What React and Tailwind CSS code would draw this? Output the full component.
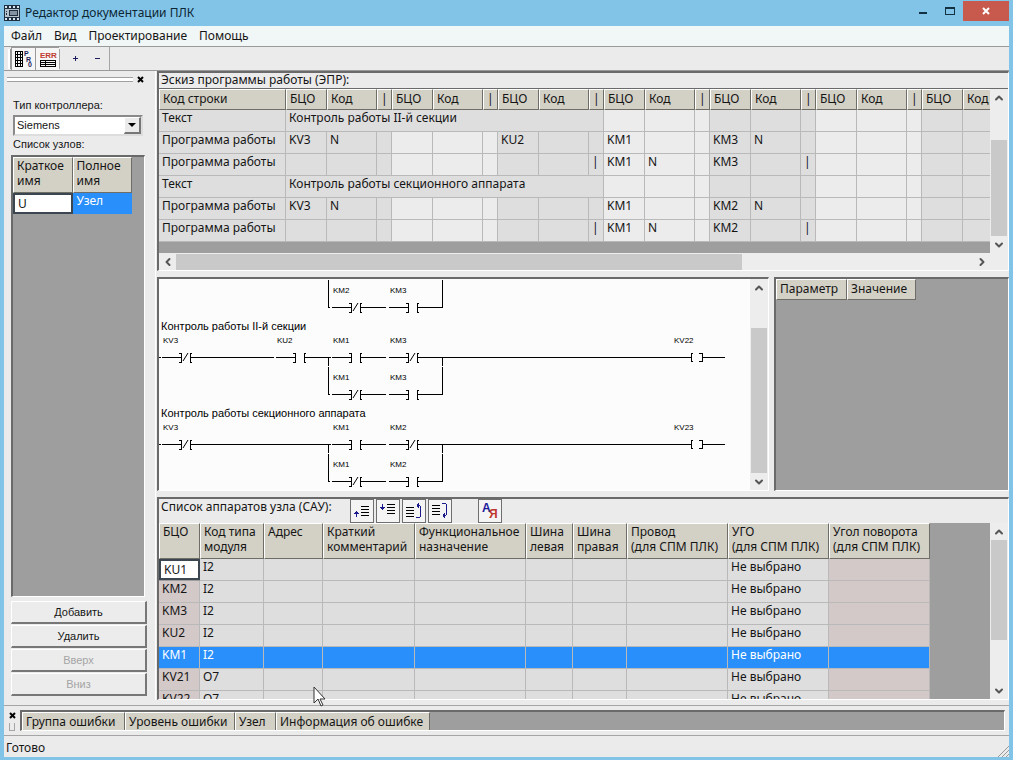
import { ChevronUp, ChevronDown, ChevronLeft, ChevronRight } from 'lucide-react'

const MENU = ['Файл', 'Вид', 'Проектирование', 'Помощь']

const GROUPS = [0, 1, 2, 3, 4, 5, 6]

// cells are keyed by "group.column", column 0 = БЦО, 1 = Код, 2 = |
const SKETCH_ROWS = [
  { type: 'Текст', text: 'Контроль работы II-й секции' },
  { type: 'Программа работы', cells: { '0.0': 'KV3', '0.1': 'N', '2.0': 'KU2', '3.0': 'KM1', '4.0': 'KM3', '4.1': 'N' } },
  { type: 'Программа работы', cells: { '2.2': '|', '3.0': 'KM1', '3.1': 'N', '4.0': 'KM3', '4.2': '|' } },
  { type: 'Текст', text: 'Контроль работы секционного аппарата' },
  { type: 'Программа работы', cells: { '0.0': 'KV3', '0.1': 'N', '3.0': 'KM1', '4.0': 'KM2', '4.1': 'N' } },
  { type: 'Программа работы', cells: { '2.2': '|', '3.0': 'KM1', '3.1': 'N', '4.0': 'KM2', '4.2': '|' } },
]

const DEVICE_COLS = [
  { title: ['БЦО'], width: 'w-[41px]' },
  { title: ['Код типа', 'модуля'], width: 'w-[64px]' },
  { title: ['Адрес'], width: 'w-[59px]' },
  { title: ['Краткий', 'комментарий'], width: 'w-[92px]' },
  { title: ['Функциональное', 'назначение'], width: 'w-[111px]' },
  { title: ['Шина', 'левая'], width: 'w-[47px]' },
  { title: ['Шина', 'правая'], width: 'w-[54px]' },
  { title: ['Провод', '(для СПМ ПЛК)'], width: 'w-[101px]' },
  { title: ['УГО', '(для СПМ ПЛК)'], width: 'w-[101px]' },
  { title: ['Угол поворота', '(для СПМ ПЛК)'], width: 'w-[101px]' },
]

const DEVICES = [
  { name: 'KU1', code: 'I2', editing: true },
  { name: 'KM2', code: 'I2' },
  { name: 'KM3', code: 'I2' },
  { name: 'KU2', code: 'I2' },
  { name: 'KM1', code: 'I2', selected: true },
  { name: 'KV21', code: 'O7' },
  { name: 'KV22', code: 'O7' },
]

const HEAD = 'border-t border-l border-r border-b border-t-white border-l-white border-r-[#6f6e66] border-b-[#6f6e66] bg-[#d3d0c5] px-[3px] text-left align-top font-normal whitespace-nowrap'
const CELL = 'h-[22px] border-r border-b border-[#b9b9b9] px-[3px] align-top leading-4 whitespace-nowrap'
const SUNKEN = 'border-t-2 border-l-2 border-r border-b border-t-[#6a6a6a] border-l-[#6a6a6a] border-r-white border-b-white'

function VScroll({ thumb, before }) {
  return (
    <div className="flex w-[18px] shrink-0 flex-col bg-[#ededed] text-[#555]">
      <button aria-label="Вверх" className="flex h-[17px] items-center justify-center">
        <ChevronUp size={12} strokeWidth={4} />
      </button>
      <div className={`flex min-h-0 flex-1 flex-col px-px ${before}`}>
        <div className={`bg-[#c9c9c9] ${thumb}`} />
      </div>
      <button aria-label="Вниз" className="flex h-[17px] items-center justify-center">
        <ChevronDown size={12} strokeWidth={4} />
      </button>
    </div>
  )
}

function TitleBar() {
  return (
    <header className="flex h-[26px] shrink-0 items-center bg-[#82c4e8]">
      <svg width="16" height="16" viewBox="0 0 16 16" className="shrink-0" shapeRendering="crispEdges">
        <rect width="16" height="16" fill="#203040" />
        <path d="M1 1h2v2H1zM5 1h2v2H5zM9 1h2v2H9zM13 1h2v2h-2zM1 13h2v2H1zM5 13h2v2H5zM9 13h2v2H9zM13 13h2v2h-2z" fill="#d8e8f0" />
        <path d="M1 4h14v8H1z" fill="#b8c4cc" />
        <path d="M5 5h9v6H5z" fill="#203040" />
        <path d="M6 6h7v4H6z" fill="#8594a2" />
        <path d="M2 6h1v1H2zM2 8h1v2H2z" fill="#203040" />
      </svg>
      <h1 className="ml-[5px] flex-1 text-[12px] text-[#0d2633]">Редактор документации ПЛК</h1>
      <div className="flex h-full items-start">
        <button aria-label="Свернуть" className="flex h-[20px] w-[27px] items-center justify-center">
          <svg width="8" height="12"><path d="M0 8h8v2H0z" fill="#12303f" /></svg>
        </button>
        <button aria-label="Развернуть" className="flex h-[22px] w-[27px] items-center justify-center">
          <svg width="10" height="8" shapeRendering="crispEdges"><path d="M0 0h10v8H0zM1 2v5h8V2z" fill="#12303f" fillRule="evenodd" /></svg>
        </button>
        <button aria-label="Закрыть" className="mt-px flex h-[20px] w-[46px] items-center justify-center bg-[#c75a4c]">
          <svg width="8" height="8"><path d="M1 1l6 6M7 1l-6 6" stroke="#fff" strokeWidth="2" /></svg>
        </button>
      </div>
    </header>
  )
}

function Toolbar() {
  return (
    <div className="flex h-[24px] shrink-0 items-center border-b border-[#9a9a9a] bg-[#ebebeb] pl-1">
      <div className="h-5 w-[3px] border-r border-[#9a9a9a] bg-white" />
      <button aria-label="Программа" className="flex h-[23px] w-6 items-center justify-center border-l border-t border-[#9a9a9a] bg-[#f6f6f6]">
        <svg width="18" height="18" shapeRendering="crispEdges">
          <path d="M0 1h8v16H0z" fill="#000" />
          {[2, 5, 8, 11, 14].map((y) => (
            <path key={y} d={`M1 ${y}h1v2h-1zM3 ${y}h2v2h-2zM6 ${y}h1v2h-1z`} fill="#f6f6f6" />
          ))}
          <g fill="#1d1d5c" fontFamily="Liberation Sans" fontWeight="bold" fontSize="7">
            <text x="9" y="6">P</text>
            <text x="11" y="12">R</text>
            <text x="13" y="17">0</text>
          </g>
        </svg>
      </button>
      <button aria-label="Ошибки" className="flex h-[23px] w-6 items-center justify-center border-l border-t border-[#9a9a9a] bg-[#f6f6f6]">
        <svg width="18" height="18" shapeRendering="crispEdges">
          <text x="1" y="8" fill="#c03a30" fontFamily="Liberation Sans Narrow, Liberation Sans" fontWeight="bold" fontSize="8">ERR</text>
          <path d="M1 10h16v7H1z" fill="#000" />
          <path d="M2 11h4v1H2zM7 11h9v1H7zM2 13h4v1H2zM7 13h9v1H7zM2 15h4v1H2zM7 15h9v1H7z" fill="#f6f6f6" />
        </svg>
      </button>
      <div className="h-5 w-px bg-[#a5a5a5]" />
      <div className="flex h-full w-[50px] items-center justify-around border-r border-[#a5a5a5] pl-1">
        <button aria-label="Добавить строку" className="h-5 w-5">
          <svg width="20" height="20" shapeRendering="crispEdges"><path d="M8 9h5v1H8zM10 7h1v5h-1z" fill="#1d1d5c" /></svg>
        </button>
        <button aria-label="Удалить строку" className="h-5 w-5">
          <svg width="20" height="20" shapeRendering="crispEdges"><path d="M7 9h5v1H7z" fill="#1d1d5c" /></svg>
        </button>
      </div>
    </div>
  )
}

function SideButton({ children, disabled }) {
  return (
    <button
      disabled={disabled}
      className="h-[23px] border-t border-l border-r-2 border-b-2 border-t-white border-l-white border-r-[#777] border-b-[#777] bg-[#ececec] text-[11px] leading-4 disabled:text-[#a5a5a5]"
    >
      {children}
    </button>
  )
}

function Sidebar() {
  return (
    <aside className="flex w-[152px] shrink-0 flex-col border-r border-white bg-[#ebebeb] pr-2 pl-[7px] pb-1 font-['Liberation_Sans',Arial,sans-serif]">
      <div className="-ml-1 flex h-[17px] shrink-0 items-center gap-1">
        <div className="h-[5px] flex-1 border-y border-[#a0a0a0] bg-white" />
        <button aria-label="Закрыть панель" className="w-[10px]">
          <svg width="7" height="7"><path d="M1 1l5 5M6 1l-5 5" stroke="#000" strokeWidth="2" /></svg>
        </button>
      </div>
      <label htmlFor="controller" className="mt-[9px] ml-0.5 text-[11px] leading-4">Тип контроллера:</label>
      <div className="relative mt-[2px] mr-1 ml-0.5">
        <select
          id="controller"
          defaultValue="Siemens"
          className="h-[21px] w-full appearance-none border-2 border-[#8a8a8a] border-r-[#ddd] border-b-[#ddd] bg-white pl-0.5 text-[11px]"
        >
          <option>Siemens</option>
        </select>
        <div className="pointer-events-none absolute top-0.5 right-0.5 flex h-[17px] w-[17px] items-center justify-center border-t border-l border-r-2 border-b-2 border-t-white border-l-white border-r-[#777] border-b-[#777] bg-[#ebebeb]">
          <svg width="8" height="4"><path d="M0 0h8L4 4z" fill="#000" /></svg>
        </div>
      </div>
      <p className="ml-0.5 text-[11px] leading-4">Список узлов:</p>
      <div className={`mt-[3px] mr-0.5 min-h-0 flex-1 bg-[#9e9e9e] font-['Noto_Sans',sans-serif] ${SUNKEN}`}>
        <table className="w-[119px] table-fixed border-separate border-spacing-0 text-[12px] leading-[15px]">
          <thead>
            <tr>
              <th className={`h-9 ${HEAD}`}>Краткое<br />имя</th>
              <th className={`h-9 ${HEAD}`}>Полное<br />имя</th>
            </tr>
          </thead>
          <tbody>
            <tr>
              <td className="p-0">
                <input aria-label="Краткое имя" defaultValue="U" className="block h-[21px] w-full border-2 border-[#3c4650] bg-white px-[3px]" />
              </td>
              <td className="h-[21px] bg-[#2990fb] px-1 align-top text-white">Узел</td>
            </tr>
          </tbody>
        </table>
      </div>
      <div className="mt-1 flex flex-col gap-[1px]">
        <SideButton>Добавить</SideButton>
        <SideButton>Удалить</SideButton>
        <SideButton disabled>Вверх</SideButton>
        <SideButton disabled>Вниз</SideButton>
      </div>
    </aside>
  )
}

function SketchPanel() {
  return (
    <section className={`flex h-[200px] shrink-0 flex-col bg-[#ebebeb] ${SUNKEN}`}>
      <h2 className="h-[15px] shrink-0 pl-0.5 leading-[14px]">Эскиз программы работы (ЭПР):</h2>
      <div className="flex min-h-0 flex-1 border-t border-[#6a6a6a]">
        <div className="min-w-0 flex-1 overflow-hidden bg-[#9e9e9e]">
          <table className="w-[869px] table-fixed border-separate border-spacing-0">
            <colgroup>
              <col className="w-[127px]" />
              {GROUPS.map((g) => [
                <col key={`${g}a`} className="w-[41px]" />,
                <col key={`${g}b`} className="w-[50px]" />,
                <col key={`${g}c`} className="w-[15px]" />,
              ])}
            </colgroup>
            <thead>
              <tr className="leading-[17px]">
                <th className={`h-[21px] ${HEAD}`}>Код строки</th>
                {GROUPS.map((g) => [
                  <th key={`${g}a`} className={HEAD}>БЦО</th>,
                  <th key={`${g}b`} className={HEAD}>Код</th>,
                  <th key={`${g}c`} className={HEAD}>{g < 6 && '|'}</th>,
                ])}
              </tr>
            </thead>
            <tbody>
              {SKETCH_ROWS.map((row, i) => (
                <tr key={i}>
                  <td className={`bg-[#dedede] ${CELL}`}>{row.type}</td>
                  {row.text && <td colSpan={9} className={`bg-[#dedede] ${CELL}`}>{row.text}</td>}
                  {GROUPS.filter((g) => !row.text || g > 2).map((g) =>
                    [0, 1, 2].map((c) => (
                      <td key={`${g}.${c}`} className={`${g % 2 ? 'bg-[#ececec]' : 'bg-[#dedede]'} ${CELL}`}>
                        {row.cells?.[`${g}.${c}`]}
                      </td>
                    ))
                  )}
                </tr>
              ))}
            </tbody>
          </table>
        </div>
        <VScroll before="pt-[34px]" thumb="flex-1" />
      </div>
      <div className="flex h-[17px] shrink-0 items-center bg-[#ededed] pr-[18px] text-[#555]">
        <button aria-label="Влево" className="flex w-[17px] justify-center">
          <ChevronLeft size={12} strokeWidth={4} />
        </button>
        <div className="h-4 flex-1">
          <div className="h-full w-[71%] bg-[#c9c9c9]" />
        </div>
        <button aria-label="Вправо" className="flex w-[17px] justify-center">
          <ChevronRight size={12} strokeWidth={4} />
        </button>
      </div>
    </section>
  )
}

// One contact of the ladder, 57px wide: wire, bracket, optional slash, bracket, wire
function Contact({ x, y, name, closed }) {
  return (
    <g>
      <text x={x + 2} y={y - 14} fontSize="8">{name}</text>
      <path
        d={`M${x + 1} ${y}h19M${x + 18} ${y - 4}h2v9h-2M${x + 31} ${y - 4}h-2v9h2M${x + 29} ${y}h26`}
        fill="none"
        stroke="#000"
        strokeWidth="1"
      />
      {closed && <path d={`M${x + 22} ${y + 4}l5 -8`} stroke="#000" shapeRendering="auto" />}
    </g>
  )
}

function Coil({ x, y, name }) {
  return (
    <g>
      <text x={x - 17} y={y - 14} fontSize="8">{name}</text>
      <path d={`M${x + 2} ${y - 4}h-2v8h2M${x + 8} ${y - 4}h3v8h-3M${x + 11} ${y}h23`} fill="none" stroke="#000" />
    </g>
  )
}

function Branch({ y, contacts }) {
  return (
    <g>
      <path d={`M169 ${y}v9M169 ${y + 10}v27h2M283 ${y}v9M283 ${y + 10}v27h-13`} fill="none" stroke="#000" />
      <Contact x={172} y={y + 37} name={contacts[0]} closed />
      <Contact x={229} y={y + 37} name={contacts[1]} />
    </g>
  )
}

function Ladder() {
  return (
    <svg width="590" height="210" className="shrink-0" shapeRendering="crispEdges" fontFamily="Liberation Sans, Arial, sans-serif">
      <Branch y={-9} contacts={['KM2', 'KM3']} />

      <text x="2" y="51" fontSize="11">Контроль работы II-й секции</text>
      <path d="M0 78h2M57 78h58M166 78h6M282 78h250" stroke="#000" />
      <Contact x={2} y={78} name="KV3" closed />
      <Contact x={116} y={78} name="KU2" />
      <Contact x={172} y={78} name="KM1" />
      <Contact x={229} y={78} name="KM3" closed />
      <Coil x={532} y={78} name="KV22" />
      <Branch y={78} contacts={['KM1', 'KM3']} />

      <text x="2" y="138" fontSize="11">Контроль работы секционного аппарата</text>
      <path d="M0 165h2M57 165h115M282 165h250" stroke="#000" />
      <Contact x={2} y={165} name="KV3" closed />
      <Contact x={172} y={165} name="KM1" />
      <Contact x={229} y={165} name="KM2" closed />
      <Coil x={532} y={165} name="KV23" />
      <Branch y={165} contacts={['KM1', 'KM2']} />
    </svg>
  )
}

function MiddleRow() {
  return (
    <div className="flex min-h-0 flex-1 gap-[5px]">
      <section className={`flex min-w-0 flex-1 bg-[#fcfcfc] ${SUNKEN}`}>
        <div className="min-w-0 flex-1 overflow-hidden"><Ladder /></div>
        <VScroll before="pt-8" thumb="flex-1" />
      </section>
      <section className={`w-[235px] shrink-0 bg-[#9e9e9e] ${SUNKEN}`}>
        <table className="w-[140px] table-fixed border-separate border-spacing-0 leading-[17px]">
          <thead>
            <tr>
              <th className={`h-[21px] w-[71px] ${HEAD}`}>Параметр</th>
              <th className={`h-[21px] ${HEAD}`}>Значение</th>
            </tr>
          </thead>
        </table>
      </section>
    </div>
  )
}

function DeviceButton({ label, children }) {
  return (
    <button aria-label={label} className="flex h-6 w-6 items-center justify-center border border-[#6f6f6f] bg-[#f4f4f4]">
      {children}
    </button>
  )
}

// four text lines, 1px each
function TextLines({ x, y }) {
  return <path d={`M${x} ${y}h8v1h-8zM${x} ${y + 3}h8v1h-8zM${x} ${y + 6}h8v1h-8zM${x} ${y + 9}h8v1h-8z`} fill="#000" />
}

function DeviceToolbar() {
  return (
    <div className="flex items-start gap-0.5">
      <DeviceButton label="Вставить выше">
        <svg width="20" height="20" shapeRendering="crispEdges">
          <TextLines x={9} y={5} />
          <path d="M4 10h1v6H4zM3 11h3v1H3zM2 12h5v1H2z" fill="#1a1a8c" />
        </svg>
      </DeviceButton>
      <DeviceButton label="Вставить ниже">
        <svg width="20" height="20" shapeRendering="crispEdges">
          <TextLines x={9} y={3} />
          <path d="M4 3h1v6H4zM2 6h5v1H2zM3 7h3v1H3z" fill="#1a1a8c" />
        </svg>
      </DeviceButton>
      <DeviceButton label="Переместить вверх">
        <svg width="20" height="20" shapeRendering="crispEdges">
          <TextLines x={2} y={6} />
          <path d="M12 16h4v1h-4zM16 5h1v11h-1zM13 4h3v1h-3zM14 2h1v5h-1zM13 3h1v3h-1z" fill="#1a1a8c" />
        </svg>
      </DeviceButton>
      <DeviceButton label="Переместить вниз">
        <svg width="20" height="20" shapeRendering="crispEdges">
          <TextLines x={2} y={4} />
          <path d="M12 2h4v1h-4zM16 3h1v11h-1zM13 14h3v1h-3zM14 12h1v5h-1zM13 13h1v3h-1z" fill="#1a1a8c" />
        </svg>
      </DeviceButton>
      <div className="w-[22px]" />
      <DeviceButton label="Сортировать">
        <svg width="20" height="20" fontFamily="Liberation Sans" fontWeight="bold" fontSize="12">
          <text x="2" y="11" fill="#1a1a9c">А</text>
          <text x="9" y="17" fill="#c0352c">Я</text>
        </svg>
      </DeviceButton>
    </div>
  )
}

function DeviceRow({ device }) {
  const text = device.selected ? 'text-white' : ''
  const bg = device.selected ? 'bg-[#2990fb]' : 'bg-[#dedede]'
  const pink = device.selected ? 'bg-[#2990fb]' : 'bg-[#d4c9c9]'
  return (
    <tr className={text}>
      {device.editing ? (
        <td className="h-[22px] p-0 align-top">
          <input aria-label="БЦО" defaultValue={device.name} className="block h-[21px] w-full border-2 border-[#3c4650] bg-white px-[3px]" />
        </td>
      ) : (
        <td className={`${pink} ${CELL}`}>{device.name}</td>
      )}
      <td className={`${bg} ${CELL}`}>{device.code}</td>
      {[0, 1, 2, 3, 4, 5].map((i) => <td key={i} className={`${bg} ${CELL}`} />)}
      <td className={`${bg} ${CELL}`}>Не выбрано</td>
      <td className={`${pink} ${CELL}`} />
    </tr>
  )
}

function DevicePanel() {
  return (
    <section className={`flex h-[203px] shrink-0 flex-col bg-[#ebebeb] ${SUNKEN}`}>
      <div className="flex h-[24px] shrink-0">
        <h2 className="w-[191px] pl-0.5 leading-[15px]">Список аппаратов узла (САУ):</h2>
        <DeviceToolbar />
      </div>
      <div className="flex min-h-0 flex-1">
        <div className="min-w-0 flex-1 overflow-hidden bg-[#9e9e9e]">
          <table className="w-[771px] table-fixed border-separate border-spacing-0">
            <thead>
              <tr className="leading-[15px]">
                {DEVICE_COLS.map((col, i) => (
                  <th key={i} className={`h-9 ${col.width} ${HEAD}`}>
                    {col.title.map((line) => <div key={line}>{line}</div>)}
                  </th>
                ))}
              </tr>
            </thead>
            <tbody>
              {DEVICES.map((device) => <DeviceRow key={device.name} device={device} />)}
            </tbody>
          </table>
        </div>
        <VScroll before="" thumb="h-[100px]" />
      </div>
    </section>
  )
}

function ErrorPanel() {
  return (
    <section className="mt-[5px] flex h-[31px] shrink-0 border-y border-t-[#a5a5a5] border-b-[#a5a5a5] bg-[#ebebeb] pt-1 pr-1 pb-1">
      <div className="flex w-4 flex-col items-center gap-1 pt-0.5">
        <button aria-label="Закрыть панель">
          <svg width="7" height="7"><path d="M1 1l5 5M6 1l-5 5" stroke="#000" strokeWidth="2" /></svg>
        </button>
        <div className="h-2 w-[6px] border-x border-b border-[#a5a5a5]" />
      </div>
      <div className={`flex-1 overflow-hidden bg-[#9e9e9e] ${SUNKEN}`}>
        <table className="w-[408px] table-fixed border-separate border-spacing-0 leading-[18px]">
          <thead>
            <tr>
              <th className={`w-[103px] ${HEAD}`}>Группа ошибки</th>
              <th className={`w-[110px] ${HEAD}`}>Уровень ошибки</th>
              <th className={`w-[41px] ${HEAD}`}>Узел</th>
              <th className={`w-[154px] ${HEAD}`}>Информация об ошибке</th>
            </tr>
          </thead>
        </table>
      </div>
    </section>
  )
}

export default function App() {
  return (
    <div className="h-screen bg-white pr-[3px] pb-0.5">
      <div className="relative flex h-full flex-col overflow-hidden border-x-4 border-b-[3px] border-[#82c4e8] bg-[#ebebeb] font-['Noto_Sans','Segoe_UI',sans-serif] text-[12px] text-[#151515]">
        <TitleBar />
        <nav className="flex h-[21px] shrink-0 items-center gap-3 border-b border-[#9a9a9a] bg-[#f1f6f6] pl-[7px]">
          {MENU.map((item) => <button key={item}>{item}</button>)}
        </nav>
        <Toolbar />
        <div className="flex min-h-0 flex-1">
          <Sidebar />
          <main className="flex min-w-0 flex-1 flex-col gap-[6px] pl-px">
            <SketchPanel />
            <MiddleRow />
            <DevicePanel />
          </main>
        </div>
        <ErrorPanel />
        <footer className="flex h-[21px] shrink-0 items-end justify-between pl-0.5">
          <span>Готово</span>
          <svg width="12" height="12">
            <path d="M1 12L12 1M5 12L12 5M9 12l3-3" stroke="#999" strokeWidth="1" />
          </svg>
        </footer>

        {/* mouse pointer */}
        <svg width="13" height="21" viewBox="0 0 13 21" className="pointer-events-none absolute top-[686px] left-[309px]">
          <path d="M1 1v16l4-4 3 7 2-1-3-6h5z" fill="#fff" stroke="#333" strokeWidth="1" />
        </svg>
      </div>
    </div>
  )
}
